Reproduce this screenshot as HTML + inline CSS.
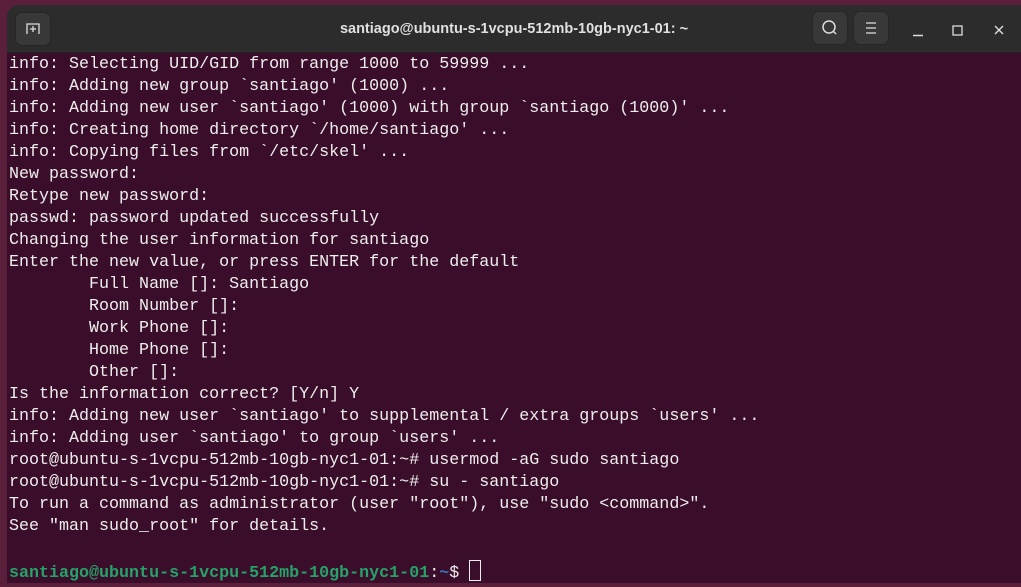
<!DOCTYPE html>
<html><head><style>
body{margin:0;width:1021px;height:587px;overflow:hidden;background:#5a1f3a;position:relative;font-family:"Liberation Sans",sans-serif}
.win{position:absolute;left:7px;top:5px;width:1030px;height:578px;background:#3a0d2b;border-radius:12px 12px 0 0;overflow:hidden}
.tb{height:47px;background:#2c2c2c;position:relative;border-bottom:1px solid #222}
.title{position:absolute;left:0;right:16px;top:0;line-height:48px;text-align:center;color:#e0e0e0;font-weight:bold;font-size:14.5px}
.btn{position:absolute;top:11px;width:34px;height:32px;background:#383838;border-radius:7px;border:1px solid #262626}
pre{position:absolute;left:2px;top:49px;margin:0;font-family:"Liberation Mono",monospace;font-size:16.68px;line-height:22px;color:#eeeeec}
.g{color:#26a269;font-weight:bold}.b{color:#3b6fb8;font-weight:bold}
.cur{display:inline-block;width:10px;height:19px;border:1px solid #eee;vertical-align:-4px;margin-left:10px}
</style></head><body>
<div class="win">
<div class="tb">
<div class="btn" style="left:8px;top:7px"><svg width="34" height="32"><path d="M11 21V11h12v10M17 13v6M14 16h6" fill="none" stroke="#ddd" stroke-width="1.3"/></svg></div>
<div class="title">santiago@ubuntu-s-1vcpu-512mb-10gb-nyc1-01: ~</div>
<div class="btn" style="left:805px;top:6px"><svg width="34" height="32"><circle cx="16" cy="15" r="6" fill="none" stroke="#ddd" stroke-width="1.5"/><path d="M20 19l3 3" stroke="#ddd" stroke-width="1.5"/></svg></div>
<div class="btn" style="left:846px;top:6px"><svg width="34" height="32"><path d="M12 11h10M12 16h10M12 21h10" stroke="#ddd" stroke-width="1.3"/></svg></div>
<svg style="position:absolute;left:900px;top:16px" width="110" height="22"><path d="M6 14.5h10" stroke="#ddd" stroke-width="1.5"/><rect x="46" y="5" width="9" height="9" fill="none" stroke="#ddd" stroke-width="1.3"/><path d="M88 5l8 8M96 5l-8 8" stroke="#ddd" stroke-width="1.4"/></svg>
</div>
<pre>info: Selecting UID/GID from range 1000 to 59999 ...
info: Adding new group `santiago' (1000) ...
info: Adding new user `santiago' (1000) with group `santiago (1000)' ...
info: Creating home directory `/home/santiago' ...
info: Copying files from `/etc/skel' ...
New password:
Retype new password:
passwd: password updated successfully
Changing the user information for santiago
Enter the new value, or press ENTER for the default
        Full Name []: Santiago
        Room Number []:
        Work Phone []:
        Home Phone []:
        Other []:
Is the information correct? [Y/n] Y
info: Adding new user `santiago' to supplemental / extra groups `users' ...
info: Adding user `santiago' to group `users' ...
root@ubuntu-s-1vcpu-512mb-10gb-nyc1-01:~# usermod -aG sudo santiago
root@ubuntu-s-1vcpu-512mb-10gb-nyc1-01:~# su - santiago
To run a command as administrator (user "root"), use "sudo &lt;command&gt;".
See "man sudo_root" for details.

<span class="g">santiago@ubuntu-s-1vcpu-512mb-10gb-nyc1-01</span>:<span class="b">~</span>$<span class="cur"></span></pre>
</div>
</body></html>
